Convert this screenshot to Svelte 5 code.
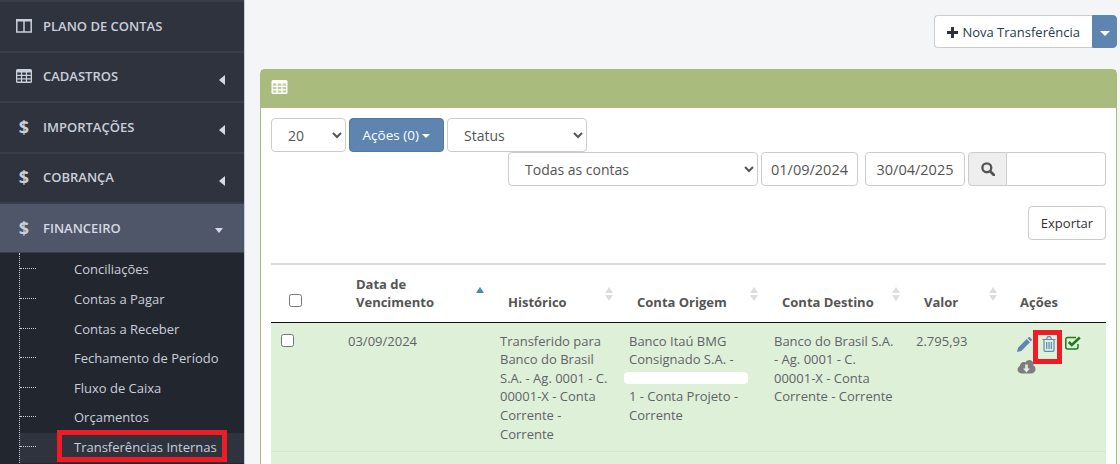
<script>
  const menu = [
    { label: 'PLANO DE CONTAS', icon: 'columns' },
    { label: 'CADASTROS', icon: 'table', arrow: true },
    { label: 'IMPORTAÇÕES', icon: 'dollar', arrow: true },
    { label: 'COBRANÇA', icon: 'dollar', arrow: true }
  ];
  const sub = [
    'Conciliações',
    'Contas a Pagar',
    'Contas a Receber',
    'Fechamento de Período',
    'Fluxo de Caixa',
    'Orçamentos'
  ];
  const heads = ['Conta Origem', 'Conta Destino'];
</script>

<div class="page">
  <aside class="sidebar">
    {#each menu as item}
      <a class="item" href="#top">
        <span class="ico">
          {#if item.icon === 'columns'}
            <svg width="16" height="14" viewBox="0 0 16 14"><path fill="none" stroke="currentColor" stroke-width="1.5" d="M.8 1h14.4v12H.8zM8 1v12"/><path fill="currentColor" d="M0 0h16v2.5H0z"/></svg>
          {:else if item.icon === 'table'}
            <svg width="16" height="14" viewBox="0 0 16 14"><rect width="16" height="14" rx="1.5" fill="currentColor"/><path fill="#2f333e" d="M1.3 3.6h3.6v2.2H1.3zM6.2 3.6h3.6v2.2H6.2zM11.1 3.6h3.6v2.2h-3.6zM1.3 7h3.6v2.2H1.3zM6.2 7h3.6v2.2H6.2zM11.1 7h3.6v2.2h-3.6zM1.3 10.400h3.600v2.200H1.300zM6.200 10.400h3.600v2.200H6.200zM11.100 10.400h3.600v2.200h-3.600z"/></svg>
          {:else}
            <span class="dollar">$</span>
          {/if}
        </span>
        <span>{item.label}</span>
        {#if item.arrow}<i class="arrow-left"></i>{/if}
      </a>
    {/each}
    <a class="item open" href="#top">
      <span class="ico"><span class="dollar">$</span></span>
      <span>FINANCEIRO</span>
      <i class="arrow-down"></i>
    </a>
    <ul class="submenu">
      {#each sub as s}
        <li><a href="#top">{s}</a></li>
      {/each}
      <li class="current"><a href="#top"><span class="mark">Transferências Internas</span></a></li>
    </ul>
  </aside>

  <main class="content">
    <div class="topbar">
      <div class="btn-group">
        <button class="btn new">
          <svg width="11" height="11" viewBox="0 0 12 12"><path fill="#2b303b" d="M4.400 0h3.200v4.400H12v3.200H7.600V12H4.400V7.600H0V4.400h4.400z"/></svg>
          Nova Transferência
        </button>
        <button class="btn caret-btn"><i class="caret"></i></button>
      </div>
    </div>

    <section class="card">
      <header class="card-head">
        <svg width="17" height="14" viewBox="0 0 16 14"><rect width="16" height="14" rx="1.5" fill="#fff"/><path fill="#a9bc7d" d="M1.300 3.600h3.600v2.200H1.300zM6.200 3.600h3.600v2.200H6.200zM11.100 3.600h3.600v2.200h-3.600zM1.300 7h3.600v2.200H1.300zM6.200 7h3.600v2.200H6.200zM11.100 7h3.600v2.200h-3.600zM1.300 10.400h3.600v2.200H1.300zM6.200 10.400h3.600v2.200H6.200zM11.100 10.400h3.600v2.200h-3.600z" opacity=".75"/></svg>
      </header>
      <div class="card-body">
        <div class="row first">
          <select class="ctl per"><option>20</option></select>
          <button class="btn actions">Ações (0) <i class="caret small"></i></button>
          <select class="ctl status"><option>Status</option></select>
        </div>
        <div class="row second">
          <select class="ctl accounts"><option>Todas as contas</option></select>
          <input class="ctl date d1" value="01/09/2024" />
          <input class="ctl date d2" value="30/04/2025" />
          <div class="search">
            <span class="addon">
              <svg width="14" height="14" viewBox="0 0 13 13"><circle cx="5.400" cy="5.400" r="4.100" fill="none" stroke="#555" stroke-width="2.200"/><path d="M8.500 8.500 12 12" stroke="#555" stroke-width="2.600" stroke-linecap="round"/></svg>
            </span>
            <input class="search-input" />
          </div>
        </div>
        <div class="row third">
          <button class="btn export">Exportar</button>
        </div>

        <table>
          <colgroup>
            <col style="width:69px" /><col style="width:152px" /><col style="width:129px" />
            <col style="width:145px" /><col style="width:142px" /><col style="width:100px" /><col />
          </colgroup>
          <thead>
            <tr>
              <th class="chk"><span class="box"></span></th>
              <th>Data de<br />Vencimento<i class="sort asc"></i></th>
              <th>Histórico<i class="sort"></i></th>
              {#each heads as h}
                <th>{h}<i class="sort"></i></th>
              {/each}
              <th>Valor<i class="sort wide"></i></th>
              <th class="last">Ações</th>
            </tr>
          </thead>
          <tbody>
            <tr class="ok">
              <td class="chk"><span class="box"></span></td>
              <td>03/09/2024</td>
              <td>Transferido para Banco do Brasil S.A. - Ag. 0001 - C. 00001-X - Conta Corrente - Corrente</td>
              <td>Banco Itaú BMG Consignado S.A. -<span class="redact"></span>1 - Conta Projeto - Corrente</td>
              <td>Banco do Brasil S.A. - Ag. 0001 - C. 00001-X - Conta Corrente - Corrente</td>
              <td>2.795,93</td>
              <td class="acts">
                <div class="act-line">
                  <svg class="pencil" width="15" height="15" viewBox="0 0 16 16"><path fill="#5f86b3" d="M0 16l1.100-4.600L10.300 2.200l3.500 3.500-9.200 9.200zM11.300 1.200 12.200.4c.5-.5 1.200-.5 1.700 0l1.700 1.700c.5.500.5 1.200 0 1.700l-.9.900z"/></svg>
                  <span class="trash-mark">
                    <svg width="14" height="16" viewBox="0 0 14 16"><path fill="none" stroke="#5b8db8" stroke-width="1.200" d="M2 4v10c0 .8.500 1.400 1.100 1.400h7.800c.6 0 1.100-.6 1.100-1.400V4M.5 3.500h13M4.500 3.300l.9-2c.1-.3.400-.6.800-.6h1.600c.4 0 .7.300.8.600l.9 2M4.700 6v7M7 6v7M9.300 6v7"/></svg>
                  </span>
                  <svg width="16" height="14" viewBox="0 0 16 14"><path fill="none" stroke="#1e7d1e" stroke-width="1.500" d="M13 8v3c0 1.200-.8 2-2 2H2.800c-1.200 0-2-.8-2-2V3.500c0-1.200.8-2 2-2H11"/><path fill="none" stroke="#1e7d1e" stroke-width="2.600" d="m3.800 6 3 3L14.800 1.500"/></svg>
                </div>
                <svg class="cloud" width="19" height="14" viewBox="0 0 18 14"><path fill="#7d7d80" d="M4 13.500C1.800 13.500 0 11.800 0 9.600c0-1.700 1-3 2.500-3.600 0-.1 0-.3 0-.4C2.500 3.500 4.200 2 6.200 2c.6 0 1.200.2 1.700.4C8.700 1 10.100 0 11.700 0c2.300 0 4.200 1.900 4.200 4.200 0 .4 0 .7-.1 1 1.300.7 2.200 2.100 2.200 3.700 0 2.500-2 4.600-4.500 4.600z"/><path fill="#dff0d8" d="M7.700 4.500h2.600v4h2.200L9 12.500l-3.500-4h2.200z"/></svg>
              </td>
            </tr>
            <tr class="ok next"><td colspan="7"></td></tr>
          </tbody>
        </table>
      </div>
    </section>
  </main>
</div>

<style>
  :global(body) {
    margin: 0;
    background: #f3f5f6;
  }
  * {
    box-sizing: border-box;
  }
  .page {
    display: flex;
    width: 1120px;
    height: 464px;
    overflow: hidden;
    font-family: 'Open Sans', sans-serif;
    font-size: 13px;
    color: #676a6c;
  }

  /* menu lateral */
  .sidebar {
    width: 245px;
    flex: none;
    background: #2f333e;
    border-right: 1px solid #c9ccd0;
  }
  .item {
    position: relative;
    display: flex;
    align-items: center;
    height: 50.5px;
    padding-left: 16px;
    border-top: 2px solid #3a3e49;
    color: #c9cfda;
    font-weight: 600;
    font-size: 13px;
    text-decoration: none;
  }
  .item:nth-child(even) {
    padding-bottom: 1.500px;
  }
  .item.open {
    height: 50px;
    padding-bottom: 0;
    background: #4f5669;
    color: #d5d9e2;
  }
  .ico {
    width: 27px;
    display: flex;
    justify-content: center;
    padding-right: 11px;
    color: #c9cfda;
  }
  .dollar {
    font-size: 18px;
    font-weight: 700;
    line-height: 20px;
  }
  .arrow-left {
    position: absolute;
    left: 219px;
    top: 22px;
    border: 5px solid transparent;
    border-left: 0;
    border-right: 6px solid #d5d9e2;
  }
  .arrow-down {
    position: absolute;
    left: 215px;
    top: 24px;
    border: 4.5px solid transparent;
    border-bottom: 0;
    border-top: 5px solid #d5d9e2;
  }
  .submenu {
    position: relative;
    list-style: none;
    margin: 0;
    padding: 2.400px 0 0;
    height: 213px;
    background: #22262f;
    border-top: 1px solid #3a3e49;
  }
  .submenu::before {
    content: '';
    position: absolute;
    left: 19px;
    top: 0;
    bottom: 0;
    border-left: 1px dotted #c9cfda;
  }
  .submenu li {
    position: relative;
    height: 29.6px;
    line-height: 29px;
    padding-left: 74px;
  }
  .submenu li::before {
    content: '';
    position: absolute;
    left: 20px;
    top: 13px;
    width: 16px;
    border-top: 1px dotted #c9cfda;
  }
  .submenu a {
    color: #c9cfda;
    text-decoration: none;
  }
  .submenu .current {
    background: #2f333e;
    margin-left: 20px;
    padding-left: 54px;
  }
  .submenu .current::before {
    left: 0;
  }
  .mark {
    position: relative;
    display: inline-block;
  }
  .mark::after {
    content: '';
    box-sizing: border-box;
    position: absolute;
    left: -17px;
    right: -10px;
    top: -3px;
    height: 32px;
    border: 5px solid #ee1c25;
  }

  /* conteúdo */
  .content {
    flex: 1;
    min-width: 0;
    padding: 15px 3px 0 15px;
  }
  .topbar {
    display: flex;
    justify-content: flex-end;
    height: 54px;
  }
  .btn-group {
    display: flex;
    height: 33px;
  }
  .btn {
    font: inherit;
    border: 1px solid #ccc;
    border-radius: 4px;
    background: #fff;
    color: #333;
    padding: 0;
  }
  .new {
    width: 158px;
    border-radius: 4px 0 0 4px;
    border-right: 0;
    color: #2b3a4a;
    white-space: nowrap;
  }
  .new svg {
    vertical-align: -1px;
    margin-right: 1px;
  }
  .caret-btn {
    width: 25px;
    border-radius: 0 4px 4px 0;
    background: #5d85b0;
    border-color: #5d85b0;
  }
  .caret {
    display: inline-block;
    border: 5px solid transparent;
    border-bottom: 0;
    border-top: 5px solid #fff;
    vertical-align: middle;
  }
  .caret.small {
    border-width: 4px 4px 0;
    border-top-color: #fff;
    vertical-align: 2px;
  }
  .card {
    height: 400px;
    width: 857px;
    background: #fff;
    border: 1px solid #a9bc7d;
    border-bottom: 0;
    border-radius: 5px 5px 0 0;
  }
  .card-head {
    height: 38px;
    background: #a9bc7d;
    padding: 10px 0 0 10px;
  }
  .card-body {
    padding: 10px 10px 0;
  }
  .row {
    display: flex;
  }
  .first {
    gap: 3px;
    height: 34px;
  }
  .second {
    justify-content: flex-end;
    height: 34px;
  }
  .third {
    justify-content: flex-end;
    margin-top: 20px;
    height: 34px;
  }
  .ctl {
    height: 34px;
    font: inherit;
    font-size: 14px;
    color: #555;
    background: #fff;
    border: 1px solid #ccc;
    border-radius: 4px;
  }
  select.ctl {
    padding: 0 12px;
  }
  .per {
    width: 75px;
  }
  .status {
    width: 140px;
  }
  .actions {
    width: 95px;
    height: 34px;
    background: #5d85b0;
    border-color: #54789f;
    color: #fff;
    font-size: 13.5px;
  }
  .accounts {
    width: 250px;
  }
  .date {
    width: 97px;
    margin-left: 3px;
    text-align: center;
    padding: 0;
    font-size: 14.5px;
  }
  .d2 {
    width: 100px;
    margin-left: 7px;
  }
  .search {
    display: flex;
    width: 138px;
    height: 34px;
    margin-left: 3px;
  }
  .addon {
    width: 39px;
    display: flex;
    align-items: center;
    justify-content: center;
    background: #eee;
    border: 1px solid #ccc;
    border-radius: 4px 0 0 4px;
  }
  .search-input {
    flex: 1;
    min-width: 0;
    border: 1px solid #ccc;
    border-left: 0;
    border-radius: 0 4px 4px 0;
    background: #fff;
  }
  .export {
    width: 78px;
    height: 34px;
  }

  /* tabela */
  table {
    width: 835px;
    margin-top: 23px;
    border-collapse: collapse;
    table-layout: fixed;
    border-top: 2px solid #ddd;
    line-height: 18.6px;
  }
  th {
    position: relative;
    height: 58px;
    padding: 0 0 11px 16px;
    line-height: 18px;
    text-align: left;
    vertical-align: bottom;
    color: #555;
    font-weight: 700;
    border-bottom: 1px solid #111;
  }
  th.chk {
    padding: 0 0 15px 18px;
  }
  th.last {
    padding-left: 12px;
  }
  td {
    padding: 9.200px 8px 8px;
    vertical-align: top;
    color: #5f6369;
    border-bottom: 1px solid #d6e6ce;
  }
  td.chk {
    padding: 11px 0 0 10px;
  }
  .ok {
    background: #dff0d8;
  }
  .next td {
    height: 20px;
    padding: 0;
    border: 0;
  }
  .box {
    display: block;
    width: 13px;
    height: 13px;
    border: 1px solid #767676;
    border-radius: 2.5px;
    background: #fff;
  }
  .sort {
    position: absolute;
    right: 7px;
    top: 22px;
    width: 9px;
    height: 14px;
  }
  .sort.wide {
    right: 10px;
  }
  .sort::before,
  .sort::after {
    content: '';
    position: absolute;
    left: 0;
    border: 4.5px solid transparent;
    border-top: 0;
    border-bottom: 6px solid #ddd;
  }
  .sort::before {
    top: 0;
  }
  .sort::after {
    bottom: 0;
    transform: rotate(180deg);
  }
  .sort.asc {
    right: 7px;
    top: 22px;
  }
  .sort.asc::before {
    border-bottom-color: #4d86c6;
  }
  .sort.asc::after {
    display: none;
  }
  .redact {
    display: block;
    height: 18.6px;
    position: relative;
  }
  .redact::after {
    content: '';
    position: absolute;
    left: -5px;
    right: 10px;
    top: 3px;
    height: 12px;
    background: #fff;
    border-radius: 4px;
  }
  .acts {
    padding: 13px 0 0 9px;
  }
  .act-line {
    display: flex;
    align-items: flex-start;
    height: 24px;
  }
  .pencil {
    margin-top: 1px;
  }
  .trash-mark {
    position: relative;
    display: block;
    height: 16px;
    margin: 0 9px 0 10px;
  }
  .trash-mark::after {
    content: '';
    box-sizing: border-box;
    position: absolute;
    left: -9px;
    top: -6px;
    width: 29px;
    height: 34px;
    border: 5px solid #ee1c25;
  }
  .cloud {
    display: block;
  }
</style>
